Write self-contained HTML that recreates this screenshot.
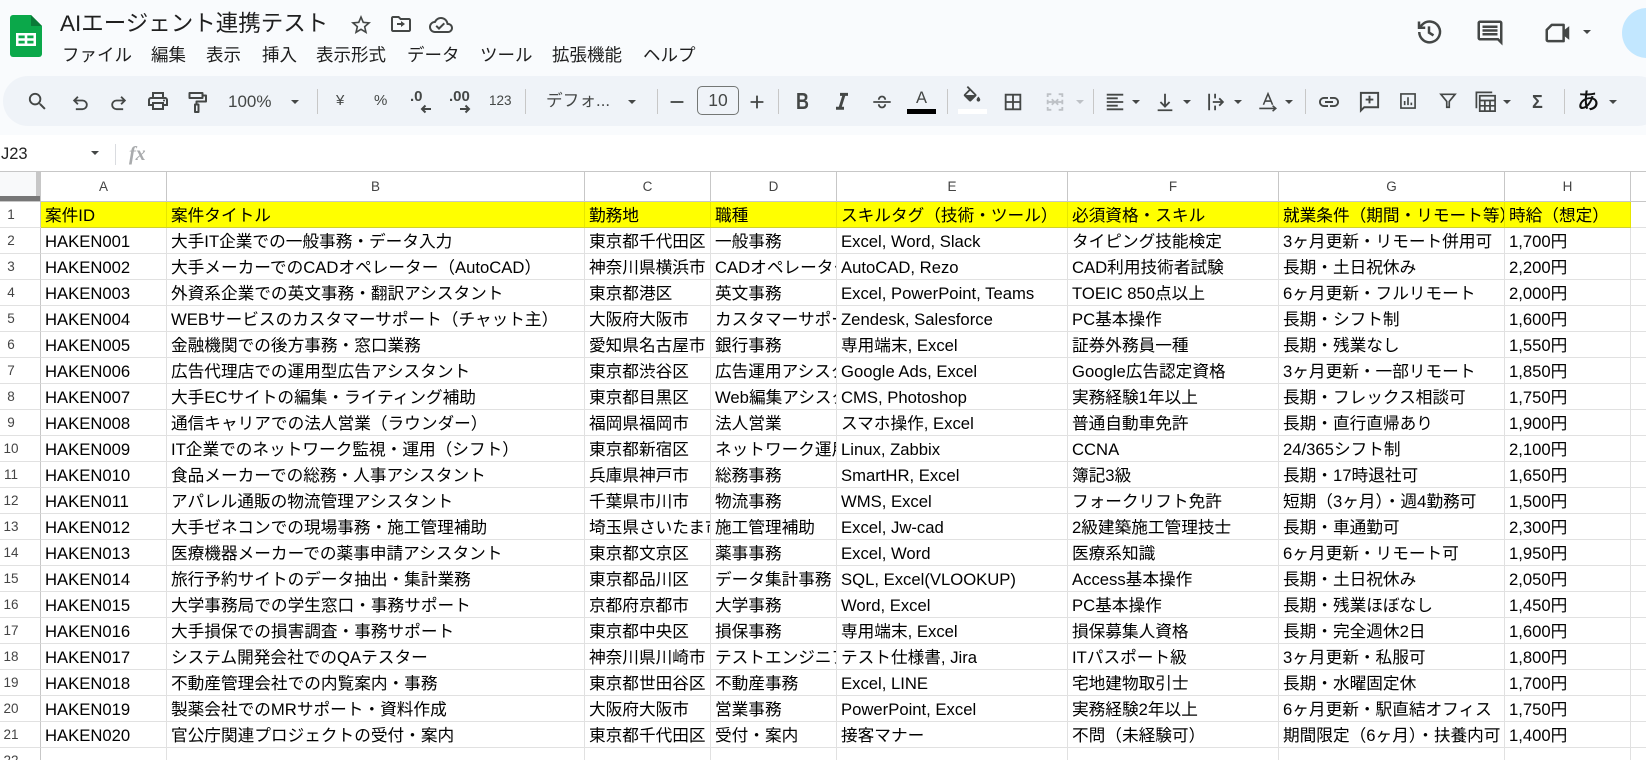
<!DOCTYPE html>
<html lang="ja"><head><meta charset="utf-8"><title>AIエージェント連携テスト</title>
<style>
html,body{margin:0;padding:0;width:1646px;height:760px;overflow:hidden;background:#f9fbfd;font-family:"Liberation Sans","Noto Sans CJK JP",sans-serif;color:#000}
#root{position:relative;width:1646px;height:760px;overflow:hidden;background:#f9fbfd}
.a{position:absolute;white-space:nowrap}
.tb{position:absolute;left:3px;top:76px;width:1660px;height:50px;border-radius:25px;background:#eff3f8}
.fx{position:absolute;left:0;top:135px;width:1646px;height:37px;background:#fff}
svg{position:absolute;overflow:visible}
.i{top:91px;width:22px;height:22px;margin-left:-11px;fill:#444746}
.s{fill:none;stroke:#444746;stroke-width:2}
.d{position:absolute;top:89px;width:1px;height:25px;background:#c7c7c7}
.c{position:absolute;top:100px;width:0;height:0;border-left:4.7px solid transparent;border-right:4.7px solid transparent;border-top:4.7px solid #444746;margin-left:-4.7px}
.t{color:#444746;font-size:17px;line-height:22px;top:90px}
.m{top:44px;font-size:17.5px;line-height:22px;color:#1f1f1f}
table{position:absolute;left:0;top:172px;border-collapse:separate;border-spacing:0;table-layout:fixed;width:1646px;background:#fff}
td,th{box-sizing:border-box;height:26px;padding:2px 0 0 4px;border-right:1px solid #e1e1e1;border-bottom:1px solid #e1e1e1;overflow:hidden;white-space:nowrap;font-size:16.67px;font-weight:400;line-height:22px;text-align:left;vertical-align:middle;background:#fff}
thead th{height:30px;padding:0;text-align:center;font-size:13.5px;color:#444;border-right:1px solid #c7c7c7;border-bottom:1px solid #c7c7c7}
tbody th{padding:0 18px 0 0;text-align:center;font-size:13.5px;color:#444;border-right:1px solid #c7c7c7}
.y td{background:#ff0;border-bottom:1px solid #cfcf30;border-right:1px solid #e6e600}
table tr>*:last-child{border-right:0}
</style></head><body><div id="root">
<div class="tb"></div><div class="fx"></div>

<svg style="left:10px;top:15px" width="32" height="42" viewBox="0 0 32 42"><path d="M3 0H21L32 11V39a3 3 0 0 1-3 3H3a3 3 0 0 1-3-3V3a3 3 0 0 1 3-3z" fill="#0ba84a"/><path d="M21 0L32 11H21z" fill="#0a7a37"/><path d="M6 18H26V31H6zM8.500 20.500V23.300H14.700V20.500zM17.300 20.500V23.300H23.500V20.500zM8.500 25.700V28.500H14.700V25.700zM17.300 25.700V28.500H23.500V25.700z" fill="#fff" fill-rule="evenodd"/></svg>

<div class="a" style="left:60px;top:10px;font-size:22.5px;line-height:28px;color:#1f1f1f">AIエージェント連携テスト</div>
<svg style="left:349px;top:13px;fill:#444746" width="24" height="24" viewBox="0 0 24 24"><path d="M22 9.240l-7.190-.620L12 2 9.190 8.630 2 9.240l5.460 4.730L5.820 21 12 17.270 18.180 21l-1.630-7.030L22 9.240zM12 15.400l-3.760 2.270 1-4.280-3.320-2.880 4.380-.380L12 6.100l1.710 4.040 4.380.380-3.320 2.880 1 4.280L12 15.400z"/></svg>
<svg style="left:389px;top:12px;fill:#444746" width="24" height="24" viewBox="0 0 24 24"><path d="M20 6h-8l-2-2H4c-1.100 0-2 .9-2 2v12c0 1.100.9 2 2 2h16c1.100 0 2-.9 2-2V8c0-1.100-.9-2-2-2zm0 12H4V6h5.170l2 2H20v10zm-8-5H8v-2h4V9l4 3-4 3z"/></svg>
<svg style="left:429px;top:13px;fill:#444746" width="24" height="24" viewBox="0 0 24 24"><path d="M19.350 10.040C18.670 6.590 15.640 4 12 4 9.110 4 6.600 5.640 5.350 8.040 2.340 8.360 0 10.910 0 14c0 3.310 2.690 6 6 6h13c2.760 0 5-2.240 5-5 0-2.640-2.050-4.780-4.650-4.960zM19 18H6c-2.210 0-4-1.790-4-4 0-2.050 1.530-3.760 3.560-3.970l1.070-.110.500-.950C8.080 7.140 9.940 6 12 6c2.620 0 4.880 1.860 5.390 4.430l.300 1.500 1.530.110c1.560.1 2.780 1.410 2.780 2.960 0 1.650-1.350 3-3 3zm-9-3.820l-2.090-2.090L6.500 13.500 10 17l6.010-6.010-1.410-1.410z"/></svg>

<div class="a m" style="left:62px">ファイル</div><div class="a m" style="left:151px">編集</div><div class="a m" style="left:206px">表示</div><div class="a m" style="left:262px">挿入</div><div class="a m" style="left:316px">表示形式</div><div class="a m" style="left:407px">データ</div><div class="a m" style="left:480px">ツール</div><div class="a m" style="left:552px">拡張機能</div><div class="a m" style="left:643px">ヘルプ</div>

<svg style="left:1414px;top:17px" class="s" width="30" height="30" viewBox="0 0 24 24"><path d="M4.200 12a8.300 8.300 0 1 0 2.400-5.900L4 8.600M4 3.600v5h5M12 7.500v5l3.600 2.200"/></svg>
<svg style="left:1475px;top:18px;fill:#444746" width="30" height="30" viewBox="0 0 24 24"><path d="M21.990 4c0-1.100-.890-2-1.990-2H4c-1.100 0-2 .9-2 2v12c0 1.100.9 2 2 2h14l4 4-.010-18zM20 4v13.170L18.830 16H4V4h16zM6 12h12v2H6zm0-3h12v2H6zm0-3h12v2H6z"/></svg>
<svg style="left:1543px;top:18px" width="30" height="30" viewBox="0 0 24 24"><path class="s" d="M7 5.500h9.500v13H4a1 1 0 0 1-1-1V9.500z" stroke-linejoin="round"/><path d="M16.500 10l4.500-3.500v11l-4.500-3.500z" fill="#444746"/></svg>
<div class="c" style="left:1588px;top:30px"></div>
<div class="a" style="left:1622px;top:8px;width:50px;height:50px;border-radius:50%;background:#c2e7ff"></div>

<!-- toolbar -->
<svg class="i" style="left:37px;top:90px;width:23px;height:23px;margin-left:-11.500px" viewBox="0 0 24 24"><path d="M15.500 14h-.790l-.280-.270A6.471 6.471 0 0 0 16 9.500 6.500 6.500 0 1 0 9.500 16c1.610 0 3.090-.590 4.230-1.570l.270.280v.790l5 4.990L20.490 19l-4.990-5zm-6 0C7.010 14 5 11.990 5 9.500S7.010 5 9.500 5 14 7.010 14 9.500 11.990 14 9.500 14z"/></svg>
<svg class="i s" style="left:80px;top:93px;width:20px;height:20px;margin-left:-10px;stroke-width:2.200" viewBox="0 0 24 24"><path d="M9.500 4.500L5 9l4.500 4.500M5 9h10a5.200 5.200 0 0 1 0 10.400H7"/></svg>
<svg class="i s" style="left:119px;top:93px;width:20px;height:20px;margin-left:-10px;stroke-width:2.200" viewBox="0 0 24 24"><path d="M14.500 4.500L19 9l-4.500 4.500M19 9H9a5.200 5.200 0 0 0 0 10.400h8"/></svg>
<svg class="i" style="left:158px;top:89px;width:24px;height:24px;margin-left:-12px" viewBox="0 0 24 24"><path d="M19 8h-1V3H6v5H5c-1.660 0-3 1.340-3 3v6h4v4h12v-4h4v-6c0-1.660-1.340-3-3-3zM8 5h8v3H8V5zm8 12v2H8v-4h8v2zm2-2v-2H6v2H4v-4c0-.550.450-1 1-1h14c.550 0 1 .450 1 1v4h-2z"/><circle cx="18" cy="11.500" r="1"/></svg>
<svg class="i s" style="left:197px;top:90px;width:24px;height:24px;margin-left:-12px" viewBox="0 0 24 24"><path d="M4.500 3h13v5h-13zM17.500 5.500H21v6H11.500v3M10 14.500h3.500V22H10z" stroke-linejoin="round"/></svg>
<div class="a t" style="left:228px;top:91px">100%</div><div class="c" style="left:296px"></div><div class="d" style="left:317px"></div>
<div class="a t" style="left:336px;top:90px;font-size:15px">¥</div><div class="a t" style="left:374px;top:90px;font-size:15px">%</div>
<div class="a t" style="left:410px;top:86px;font-size:15px;font-weight:700">.0</div>
<svg class="i s" style="left:426px;top:103px;width:12px;height:12px;margin-left:-6px" viewBox="0 0 12 12"><path d="M11 6H2M5.500 2.500L2 6l3.500 3.500"/></svg>
<div class="a t" style="left:449px;top:86px;font-size:15px;font-weight:700">.00</div>
<svg class="i s" style="left:465px;top:103px;width:12px;height:12px;margin-left:-6px" viewBox="0 0 12 12"><path d="M1 6h9M6.500 2.500L10 6 6.500 9.500"/></svg>
<div class="a t" style="left:489px;font-size:13.500px">123</div><div class="d" style="left:525px"></div>
<div class="a t" style="left:546px;font-size:16.700px">デフォ...</div><div class="c" style="left:633px"></div><div class="d" style="left:657px"></div>
<svg class="i" style="left:677px;top:91px" viewBox="0 0 24 24"><path d="M5 11h14v2H5z"/></svg>
<div class="a t" style="left:697px;top:86px;width:40px;height:27px;border:1px solid #747775;border-radius:5px;text-align:center;line-height:27px;font-size:17.500px">10</div>
<svg class="i" style="left:757px;top:91px" viewBox="0 0 24 24"><path d="M19 13h-6v6h-2v-6H5v-2h6V5h2v6h6z"/></svg><div class="d" style="left:778px"></div>
<div class="a t" style="left:795.500px;top:90px;font-size:23px;font-weight:700;transform:scaleX(.78);transform-origin:left center">B</div>
<svg class="i" style="left:842px;top:88px;width:24px;height:29px;margin-left:-12px" viewBox="0 0 24 24" preserveAspectRatio="none"><path d="M10 4v2.500h2.210l-3.420 9H6V18h8v-2.500h-2.210l3.420-9H18V4z"/></svg>
<svg class="i s" style="left:882px" viewBox="0 0 24 24"><path d="M8.500 9.500a3.500 3.500 0 0 1 7 0M8.500 14.500a3.500 3.500 0 0 0 7 0M2.500 12h19"/></svg>
<div class="a t" style="left:916px;top:87px;font-size:16.500px">A</div><div class="a" style="left:907px;top:109px;width:29px;height:5px;background:#000"></div><div class="d" style="left:947px"></div>
<svg class="i" style="left:972px;top:86px" viewBox="0 0 24 24"><path d="M16.560 8.940 7.620 0 6.210 1.410l2.380 2.380-5.150 5.150c-.590.590-.590 1.540 0 2.120l5.500 5.500c.290.290.680.440 1.060.440s.770-.150 1.060-.440l5.500-5.500c.590-.580.590-1.530 0-2.120zM5.210 10 10 5.210 14.790 10H5.210zM19 11.500s-2 2.170-2 3.500c0 1.100.9 2 2 2s2-.9 2-2c0-1.330-2-3.500-2-3.500z"/><path d="M5 10h10l-5 5z"/></svg>
<div class="a" style="left:958px;top:109px;width:29px;height:5px;background:#fff"></div>
<svg class="i" style="left:1013px" viewBox="0 0 24 24"><path d="M3 3v18h18V3H3zm8 16H5v-6h6v6zm0-8H5V5h6v6zm8 8h-6v-6h6v6zm0-8h-6V5h6v6z"/></svg>
<svg class="i s" style="left:1055px;stroke:#bdc1c6" viewBox="0 0 24 24"><path d="M8 3.500H4v3M4 17.500v3h4M16 3.500h4v3M20 17.500v3h-4M4 9.500v5M20 9.500v5M4 12h7M8.500 9l3 3-3 3M20 12h-7M15.500 9l-3 3 3 3"/></svg>
<div class="c" style="left:1081px;border-top-color:#bdc1c6"></div><div class="d" style="left:1093px"></div>
<svg class="i" style="left:1115px" viewBox="0 0 24 24"><path d="M15 15H3v2h12v-2zm0-8H3v2h12V7zM3 13h18v-2H3v2zm0 8h18v-2H3v2zM3 3v2h18V3H3z"/></svg><div class="c" style="left:1137px"></div>
<svg class="i s" style="left:1165px" viewBox="0 0 24 24"><path d="M12 3v14M7 12l5 5 5-5M4 21h16"/></svg><div class="c" style="left:1188px"></div>
<svg class="i s" style="left:1216px" viewBox="0 0 24 24"><path d="M4.500 3v18M11 3v5M11 16v5M8.500 12h10.500M15.500 8l4 4-4 4"/></svg><div class="c" style="left:1239px"></div>
<svg class="i s" style="left:1268px;stroke-width:1.700" viewBox="0 0 24 24"><path d="M7 15L12 3l5 12M8.500 11h7M2.500 19h17M17 16l3.500 3-3.500 3"/></svg><div class="c" style="left:1290px"></div><div class="d" style="left:1305px"></div>
<svg class="i" style="left:1329px;top:90px;width:24px;height:24px;margin-left:-12px" viewBox="0 0 24 24"><path d="M3.900 12c0-1.710 1.390-3.100 3.100-3.100h4V7H7c-2.760 0-5 2.240-5 5s2.240 5 5 5h4v-1.900H7c-1.710 0-3.100-1.390-3.100-3.100zM8 13h8v-2H8v2zm9-6h-4v1.900h4c1.710 0 3.100 1.390 3.100 3.100s-1.390 3.100-3.100 3.100h-4V17h4c2.760 0 5-2.240 5-5s-2.240-5-5-5z"/></svg>
<svg class="i s" style="left:1369px;top:90px;width:23px;height:23px;margin-left:-11.500px" viewBox="0 0 24 24"><path d="M3 3h18v15H6.500L3 21.500zM12 6v8M8 10h8"/></svg>
<svg class="i s" style="left:1408px;top:91px;width:20px;height:20px;margin-left:-10px" viewBox="0 0 24 24"><path d="M3.500 3.500h17v17h-17zM8 12v5M12 7.500V17M16 14v3"/></svg>
<svg class="i s" style="left:1448px;top:91px;width:20px;height:20px;margin-left:-10px" viewBox="0 0 24 24"><path d="M3.500 4h17l-7 8.500v7h-3v-7z"/></svg>
<svg class="i s" style="left:1485px;top:90px;width:23px;height:23px;margin-left:-11.500px;stroke-width:1.800" viewBox="0 0 24 24"><path d="M2.500 19V2.500H19M6 6h16v16H6zM6 11h16M6 16.500h16M11.300 11v11M16.700 11v11"/></svg><div class="c" style="left:1508px"></div>
<div class="a t" style="left:1532px;top:91px;font-size:18px;font-weight:700">Σ</div><div class="d" style="left:1564px"></div>
<div class="a" style="left:1577px;top:87px;font-size:22.500px;line-height:30px;font-weight:500;color:#111">あ</div><div class="c" style="left:1614px"></div>

<!-- formula bar -->
<div class="a" style="left:1px;top:144px;font-size:16.500px;line-height:20px;color:#222">J23</div>
<div class="c" style="left:96px;top:151px"></div>
<div class="a" style="left:115px;top:144px;width:1px;height:21px;background:#dadce0"></div>
<div class="a" style="left:129px;top:144px;font:italic 700 20px/20px 'Liberation Serif',serif;color:#a9abad">fx</div>

<!-- grid -->
<div class="a" style="left:0;top:171px;width:1646px;height:1px;background:#c7c7c7"></div>
<table>
<colgroup><col style="width:41px"><col style="width:126px"><col style="width:418px"><col style="width:126px"><col style="width:126px"><col style="width:231px"><col style="width:211px"><col style="width:226px"><col style="width:126px"><col style="width:15px"></colgroup>
<thead><tr><th></th><th>A</th><th>B</th><th>C</th><th>D</th><th>E</th><th>F</th><th>G</th><th>H</th><th></th></tr></thead>
<tbody>
<tr class="y"><th>1</th><td>案件ID</td><td>案件タイトル</td><td>勤務地</td><td>職種</td><td>スキルタグ（技術・ツール）</td><td>必須資格・スキル</td><td>就業条件（期間・リモート等）</td><td>時給（想定）</td><td style="background:#fff;border-color:#e1e1e1"></td></tr>
<tr><th>2</th><td>HAKEN001</td><td>大手IT企業での一般事務・データ入力</td><td>東京都千代田区</td><td>一般事務</td><td>Excel, Word, Slack</td><td>タイピング技能検定</td><td>3ヶ月更新・リモート併用可</td><td>1,700円</td><td></td></tr>
<tr><th>3</th><td>HAKEN002</td><td>大手メーカーでのCADオペレーター（AutoCAD）</td><td>神奈川県横浜市</td><td>CADオペレーター</td><td>AutoCAD, Rezo</td><td>CAD利用技術者試験</td><td>長期・土日祝休み</td><td>2,200円</td><td></td></tr>
<tr><th>4</th><td>HAKEN003</td><td>外資系企業での英文事務・翻訳アシスタント</td><td>東京都港区</td><td>英文事務</td><td>Excel, PowerPoint, Teams</td><td>TOEIC 850点以上</td><td>6ヶ月更新・フルリモート</td><td>2,000円</td><td></td></tr>
<tr><th>5</th><td>HAKEN004</td><td>WEBサービスのカスタマーサポート（チャット主）</td><td>大阪府大阪市</td><td>カスタマーサポート</td><td>Zendesk, Salesforce</td><td>PC基本操作</td><td>長期・シフト制</td><td>1,600円</td><td></td></tr>
<tr><th>6</th><td>HAKEN005</td><td>金融機関での後方事務・窓口業務</td><td>愛知県名古屋市</td><td>銀行事務</td><td>専用端末, Excel</td><td>証券外務員一種</td><td>長期・残業なし</td><td>1,550円</td><td></td></tr>
<tr><th>7</th><td>HAKEN006</td><td>広告代理店での運用型広告アシスタント</td><td>東京都渋谷区</td><td>広告運用アシスタント</td><td>Google Ads, Excel</td><td>Google広告認定資格</td><td>3ヶ月更新・一部リモート</td><td>1,850円</td><td></td></tr>
<tr><th>8</th><td>HAKEN007</td><td>大手ECサイトの編集・ライティング補助</td><td>東京都目黒区</td><td>Web編集アシスタント</td><td>CMS, Photoshop</td><td>実務経験1年以上</td><td>長期・フレックス相談可</td><td>1,750円</td><td></td></tr>
<tr><th>9</th><td>HAKEN008</td><td>通信キャリアでの法人営業（ラウンダー）</td><td>福岡県福岡市</td><td>法人営業</td><td>スマホ操作, Excel</td><td>普通自動車免許</td><td>長期・直行直帰あり</td><td>1,900円</td><td></td></tr>
<tr><th>10</th><td>HAKEN009</td><td>IT企業でのネットワーク監視・運用（シフト）</td><td>東京都新宿区</td><td>ネットワーク運用</td><td>Linux, Zabbix</td><td>CCNA</td><td>24/365シフト制</td><td>2,100円</td><td></td></tr>
<tr><th>11</th><td>HAKEN010</td><td>食品メーカーでの総務・人事アシスタント</td><td>兵庫県神戸市</td><td>総務事務</td><td>SmartHR, Excel</td><td>簿記3級</td><td>長期・17時退社可</td><td>1,650円</td><td></td></tr>
<tr><th>12</th><td>HAKEN011</td><td>アパレル通販の物流管理アシスタント</td><td>千葉県市川市</td><td>物流事務</td><td>WMS, Excel</td><td>フォークリフト免許</td><td>短期（3ヶ月）・週4勤務可</td><td>1,500円</td><td></td></tr>
<tr><th>13</th><td>HAKEN012</td><td>大手ゼネコンでの現場事務・施工管理補助</td><td>埼玉県さいたま市</td><td>施工管理補助</td><td>Excel, Jw-cad</td><td>2級建築施工管理技士</td><td>長期・車通勤可</td><td>2,300円</td><td></td></tr>
<tr><th>14</th><td>HAKEN013</td><td>医療機器メーカーでの薬事申請アシスタント</td><td>東京都文京区</td><td>薬事事務</td><td>Excel, Word</td><td>医療系知識</td><td>6ヶ月更新・リモート可</td><td>1,950円</td><td></td></tr>
<tr><th>15</th><td>HAKEN014</td><td>旅行予約サイトのデータ抽出・集計業務</td><td>東京都品川区</td><td>データ集計事務</td><td>SQL, Excel(VLOOKUP)</td><td>Access基本操作</td><td>長期・土日祝休み</td><td>2,050円</td><td></td></tr>
<tr><th>16</th><td>HAKEN015</td><td>大学事務局での学生窓口・事務サポート</td><td>京都府京都市</td><td>大学事務</td><td>Word, Excel</td><td>PC基本操作</td><td>長期・残業ほぼなし</td><td>1,450円</td><td></td></tr>
<tr><th>17</th><td>HAKEN016</td><td>大手損保での損害調査・事務サポート</td><td>東京都中央区</td><td>損保事務</td><td>専用端末, Excel</td><td>損保募集人資格</td><td>長期・完全週休2日</td><td>1,600円</td><td></td></tr>
<tr><th>18</th><td>HAKEN017</td><td>システム開発会社でのQAテスター</td><td>神奈川県川崎市</td><td>テストエンジニア</td><td>テスト仕様書, Jira</td><td>ITパスポート級</td><td>3ヶ月更新・私服可</td><td>1,800円</td><td></td></tr>
<tr><th>19</th><td>HAKEN018</td><td>不動産管理会社での内覧案内・事務</td><td>東京都世田谷区</td><td>不動産事務</td><td>Excel, LINE</td><td>宅地建物取引士</td><td>長期・水曜固定休</td><td>1,700円</td><td></td></tr>
<tr><th>20</th><td>HAKEN019</td><td>製薬会社でのMRサポート・資料作成</td><td>大阪府大阪市</td><td>営業事務</td><td>PowerPoint, Excel</td><td>実務経験2年以上</td><td>6ヶ月更新・駅直結オフィス</td><td>1,750円</td><td></td></tr>
<tr><th>21</th><td>HAKEN020</td><td>官公庁関連プロジェクトの受付・案内</td><td>東京都千代田区</td><td>受付・案内</td><td>接客マナー</td><td>不問（未経験可）</td><td>期間限定（6ヶ月）・扶養内可</td><td>1,400円</td><td></td></tr>
<tr><th>22</th><td></td><td></td><td></td><td></td><td></td><td></td><td></td><td></td><td></td></tr>
</tbody></table>
<div class="a" style="left:0;top:172px;width:36px;height:24px;background:#f8f9fa"></div>
<div class="a" style="left:36px;top:172px;width:5px;height:29px;background:#c7c7c7"></div>
<div class="a" style="left:0;top:196px;width:40px;height:5px;background:#777"></div>
</div></body></html>
